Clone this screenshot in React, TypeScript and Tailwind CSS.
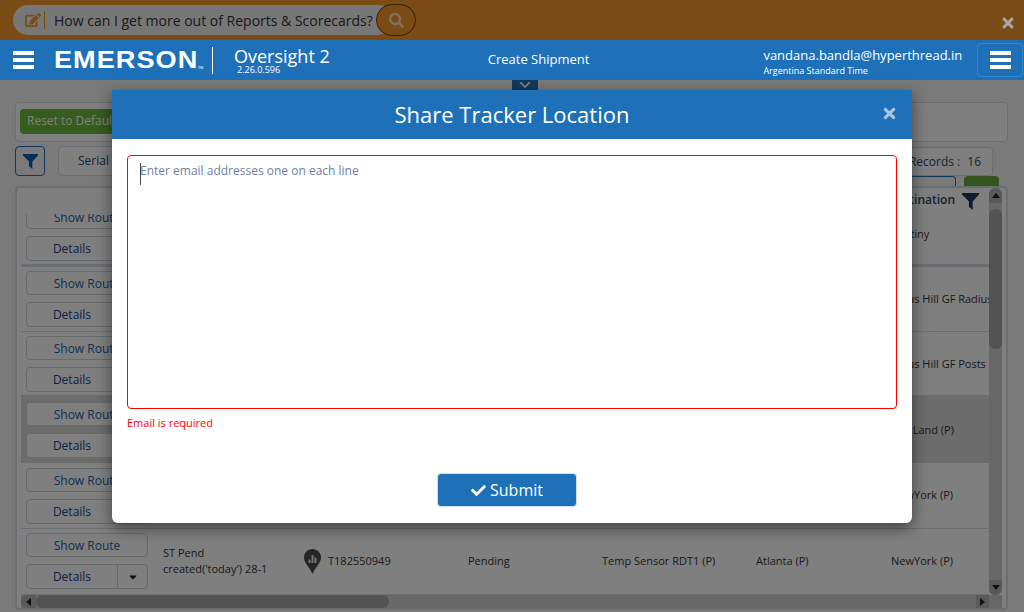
import { FaCaretDown, FaCheck, FaEdit, FaSearch, FaTimes } from 'react-icons/fa'

const font = { fontFamily: '"Open Sans", sans-serif' }

interface Shipment {
  name: string
  created: string
  serial: string
  status: string
  sensor: string
  origin: string
  destination: string
  selected?: boolean
  thick?: boolean
}

const shipments: Shipment[] = [
  { name: 'ST Pend', created: "created('today') 28-1", serial: 'T182550931', status: 'Pending', sensor: 'Temp Sensor RDT1 (P)', origin: 'Atlanta (P)', destination: 'Destiny', thick: true },
  { name: 'ST Pend', created: "created('today') 28-1", serial: 'T182550935', status: 'Pending', sensor: 'Temp Sensor RDT1 (P)', origin: 'Atlanta (P)', destination: 'Bolus Hill GF Radius' },
  { name: 'ST Pend', created: "created('today') 28-1", serial: 'T182550938', status: 'Pending', sensor: 'Temp Sensor RDT1 (P)', origin: 'Atlanta (P)', destination: 'Bolus Hill GF Posts', thick: true },
  { name: 'ST Pend', created: "created('today') 28-1", serial: 'T182550941', status: 'Pending', sensor: 'Temp Sensor RDT1 (P)', origin: 'Atlanta (P)', destination: 'PortLand (P)', selected: true },
  { name: 'ST Pend', created: "created('today') 28-1", serial: 'T182550945', status: 'Pending', sensor: 'Temp Sensor RDT1 (P)', origin: 'Atlanta (P)', destination: 'NewYork (P)' },
  { name: 'ST Pend', created: "created('today') 28-1", serial: 'T182550949', status: 'Pending', sensor: 'Temp Sensor RDT1 (P)', origin: 'Atlanta (P)', destination: 'NewYork (P)' },
]

function Hamburger() {
  return (
    <div className="flex w-[21px] flex-col gap-[3px]">
      <div className="h-[4px] bg-white" />
      <div className="h-[4px] bg-white" />
      <div className="h-[4px] bg-white" />
    </div>
  )
}

function Funnel({ size, className }: { size: number; className: string }) {
  return (
    <svg width={size} height={size} viewBox="0 0 16 16" className={className}>
      <path d="M0 0h16v1.500L10 8v8L6.500 13V8L0 1.500z" fill="currentColor" />
    </svg>
  )
}

function TrackerPin() {
  return (
    <svg width="17" height="25" viewBox="0 0 17 25">
      <path d="M8.500 0C3.800 0 0 3.700 0 8.400c0 5.400 5.600 9.600 8.500 16.600 2.900-7 8.500-11.200 8.500-16.600C17 3.700 13.200 0 8.500 0z" fill="#4a4a4a" />
      <path d="M4.500 14v-3.500h2V14zM7.500 14V6h2v8zM10.500 14V7.500l2 2V14z" fill="#e8e8e8" />
    </svg>
  )
}

function ShipmentRow({ row, index }: { row: Shipment; index: number }) {
  const height = index === 0 ? 'h-[53px]' : index === 1 || index === 3 ? 'h-[65px]' : 'h-[66px]'
  const bottom = row.thick ? 'pb-[3px]' : row.selected || index === 5 ? 'pb-[5px]' : 'pb-[4px]'
  const border = row.thick ? 'border-b-[3px] border-[#d5dae2]' : row.selected ? '' : 'border-b border-[#d5dae2]'
  const textPad = index === 0 ? 'pb-[7px]' : index >= 4 ? 'pt-[4px]' : 'pt-[5px]'

  return (
    <div
      className={`flex shrink-0 items-end overflow-hidden pl-[5px] text-[11px] text-[#333] ${height} ${bottom} ${border} ${
        row.selected ? 'bg-[#d8d8d8]' : ''
      }`}
    >
      <div className="flex w-[122px] shrink-0 flex-col gap-[7px]">
        <div className="flex h-[24px] shrink-0 items-center justify-center rounded-[4px] border border-[#ced4da] bg-white pt-[1px] text-[12px] text-[#1e5fa0]">
          Show Route
        </div>
        <div className="flex h-[25px] shrink-0 rounded-[4px] border border-[#ced4da] bg-white text-[12px] text-[#24408e]">
          <div className="flex flex-1 items-center justify-center">Details</div>
          <div className="flex w-[30px] items-center justify-center border-l border-[#ced4da] text-[#222]">
            <FaCaretDown size={12} />
          </div>
        </div>
      </div>
      <div className={`ml-[15px] w-[141px] shrink-0 self-center leading-[16px] ${textPad}`}>
        <div>{row.name}</div>
        <div>{row.created}</div>
      </div>
      <div className={`flex w-[164px] shrink-0 items-center gap-[7px] self-center ${textPad}`}>
        <TrackerPin />
        <span>{row.serial}</span>
      </div>
      <div className={`w-[134px] shrink-0 self-center ${textPad}`}>{row.status}</div>
      <div className={`w-[154px] shrink-0 self-center ${textPad}`}>{row.sensor}</div>
      <div className={`w-[135px] shrink-0 self-center ${textPad}`}>{row.origin}</div>
      <div className={`w-[99px] shrink-0 self-center overflow-hidden whitespace-nowrap ${textPad}`}>{row.destination}</div>
    </div>
  )
}

function Background() {
  return (
    <div className="flex flex-1 flex-col bg-[#f4f4f4] pb-[6px] pl-[15px] pr-[16px] pt-[22px]">
      <div className="flex h-[40px] items-center rounded-[4px] border border-[#d5dae2] bg-white pb-[2px] pl-[4px]">
        <div className="flex h-[25px] w-[120px] items-center rounded-[4px] bg-[#6cb83c] pl-[7px] text-[12px] text-white">
          Reset to Default
        </div>
      </div>
      <div className="mt-[4px] flex h-[30px] items-center">
        <div className="flex h-[30px] w-[30px] items-center justify-center rounded-[4px] border border-[#1e71b8] text-[#1e71b8]">
          <Funnel size={15} className="text-[#0f5ca8]" />
        </div>
        <div className="ml-[13px] flex h-[30px] w-[120px] items-center rounded-[4px] border border-[#d5dae2] bg-white pl-[19px] text-[12px] text-[#345]">
          Serial
        </div>
        <div className="ml-auto mr-[15px] flex h-[29px] w-[120px] items-center justify-end gap-[7px] rounded-[4px] border border-[#d5dae2] bg-white pr-[11px] pt-[1px] text-[12px] text-[#345]">
          <span className="font-medium">Records :</span>
          <span>16</span>
        </div>
      </div>
      <div className="flex h-[10px] justify-end pr-[9px]">
        <div className="h-[10px] w-[70px] rounded-t-[4px] border border-b-0 border-[#1e71b8]" />
        <div className="ml-[8px] h-[10px] w-[35px] rounded-t-[4px] bg-[#6aaa3f]" />
      </div>
      <div className="flex min-h-0 flex-1 flex-col rounded-[4px] border-2 border-[#d5dae2] bg-white pl-[4px] pr-[4px]">
        <div className="flex min-h-0 flex-1">
          <div className="flex min-w-0 flex-1 flex-col overflow-hidden">
            <div className="flex h-[26px] shrink-0 items-start justify-end gap-[7px] pr-[10px] pt-[3px] text-[12px] font-semibold text-[#345]">
              <span>Destination</span>
              <Funnel size={17} className="mt-[2px] text-[#1f3a5f]" />
            </div>
            {shipments.map((row, i) => (
              <ShipmentRow key={row.serial} row={row} index={i} />
            ))}
          </div>
          <div className="flex w-[13px] shrink-0 flex-col rounded-[6px] bg-[#cfcfcf]">
            <div className="flex h-[15px] items-center justify-center rounded-t-[6px] bg-[#b5b5b5] text-[#222]">
              <svg width="8" height="5" viewBox="0 0 8 5"><path d="M4 0l4 5H0z" fill="currentColor" /></svg>
            </div>
            <div className="mt-[6px] h-[140px] rounded-[6px] bg-[#a6a6a6]" />
            <div className="mt-auto flex h-[15px] items-center justify-center rounded-b-[6px] bg-[#b5b5b5] text-[#222]">
              <svg width="8" height="5" viewBox="0 0 8 5"><path d="M4 5l4-5H0z" fill="currentColor" /></svg>
            </div>
          </div>
        </div>
        <div className="flex h-[13px] shrink-0 bg-[#cfcfcf] pr-[13px]">
          <div className="flex w-[15px] items-center justify-center rounded-l-[6px] bg-[#b5b5b5] text-[#222]">
            <svg width="5" height="8" viewBox="0 0 5 8"><path d="M0 4l5 4V0z" fill="currentColor" /></svg>
          </div>
          <div className="w-[353px] rounded-[6px] bg-[#a6a6a6]" />
          <div className="ml-auto flex w-[13px] items-center justify-center bg-[#b5b5b5] text-[#222]">
            <svg width="5" height="8" viewBox="0 0 5 8"><path d="M5 4L0 8V0z" fill="currentColor" /></svg>
          </div>
        </div>
      </div>
    </div>
  )
}

function ShareDialog() {
  return (
    <div className="absolute left-[112px] top-[90px] z-30 flex h-[433px] w-[800px] flex-col rounded-b-[6px] bg-white shadow-[0_5px_15px_rgba(0,0,0,0.5)]">
      <div className="relative flex h-[49px] shrink-0 items-center justify-center bg-[#1e71b8] text-[22px] text-white">
        Share Tracker Location
        <FaTimes size={17} className="absolute right-[14px] top-[15px] text-[#a5c6e3]" />
      </div>
      <div className="flex flex-1 flex-col px-[15px] pt-[16px]">
        <div className="relative h-[254px] rounded-[4px] border border-[#ff0000] pl-[12px] pt-[7px] text-[12px] leading-[16px] text-[#6c7fa3]">
          <div className="absolute left-[12px] top-[7px] h-[22px] w-px bg-[#444]" />
          Enter email addresses one on each line
        </div>
        <div className="mt-[6px] text-[11px] leading-[16px] text-[#ff0000]">Email is required</div>
        <div className="mt-[42px] flex justify-center pr-[10px]">
          <div className="flex h-[34px] w-[140px] items-center justify-center gap-[4px] rounded-[4px] border border-[#cfe0ef] bg-[#1e71b8] text-[16px] text-white">
            <FaCheck size={15} />
            Submit
          </div>
        </div>
      </div>
    </div>
  )
}

export default function App() {
  return (
    <div className="relative flex h-[612px] w-[1024px] flex-col overflow-hidden" style={font}>
      <div className="relative flex h-[40px] shrink-0 items-center bg-[#f6962c] pl-[13px]">
        <div className="flex h-[30px] w-[380px] items-center rounded-full bg-[#eeeeee] pl-[12px] text-[14px] text-[#333]">
          <FaEdit size={16} className="text-[#f6962c]" />
          <div className="ml-[3px] mr-[9px] h-[18px] w-px bg-[#f6962c]" />
          How can I get more out of Reports &amp; Scorecards?
        </div>
        <div className="-ml-[17px] flex h-[32px] w-[40px] items-center justify-center rounded-full border border-[#6b4010] bg-[#f6962c] text-[#f8e0bc]">
          <FaSearch size={15} />
        </div>
        <FaTimes size={16} className="absolute right-[8px] top-[15px] z-20 text-[#a8a8a8]" />
      </div>
      <div className="relative z-20 flex h-[40px] shrink-0 items-center bg-[#1e71b8] text-white">
        <div className="ml-[13px]">
          <Hamburger />
        </div>
        <div className="ml-[20px] flex w-[148px] items-start" style={{ fontFamily: '"Liberation Sans", sans-serif' }}>
          <span className="inline-block origin-left scale-x-[1.13] text-[24px] font-bold leading-none tracking-[0.9px]">EMERSON</span>
          <span className="ml-[16px] mt-[17px] text-[4px]">TM</span>
        </div>
        <div className="ml-[10px] h-[27px] w-px bg-white" />
        <div className="ml-[21px] flex flex-col">
          <span className="text-[18px] leading-[20px]">Oversight 2</span>
          <span className="-mt-[2px] ml-[3px] text-[9px] leading-[11px]">2.26.0.596</span>
        </div>
        <div className="ml-[158px] text-[13px]">Create Shipment</div>
        <div className="ml-[174px] flex flex-col">
          <span className="text-[13px] leading-[20px]">vandana.bandla@hyperthread.in</span>
          <span className="text-[9px] leading-[11px]">Argentina Standard Time</span>
        </div>
        <div className="ml-auto mr-px flex h-[34px] w-[46px] items-center justify-center rounded-[4px] border border-[#3a84c4]">
          <Hamburger />
        </div>
      </div>
      <Background />
      <div className="absolute inset-0 z-10 bg-black/50" />
      <div className="absolute left-[512px] top-[80px] z-20 flex h-[10px] w-[26px] items-center justify-center bg-[#0f3a5c] text-[#8a8a8a]">
        <svg width="12" height="6" viewBox="0 0 12 6"><path d="M1 0l5 5 5-5" fill="none" stroke="currentColor" strokeWidth="1.500" /></svg>
      </div>
      <ShareDialog />
    </div>
  )
}
